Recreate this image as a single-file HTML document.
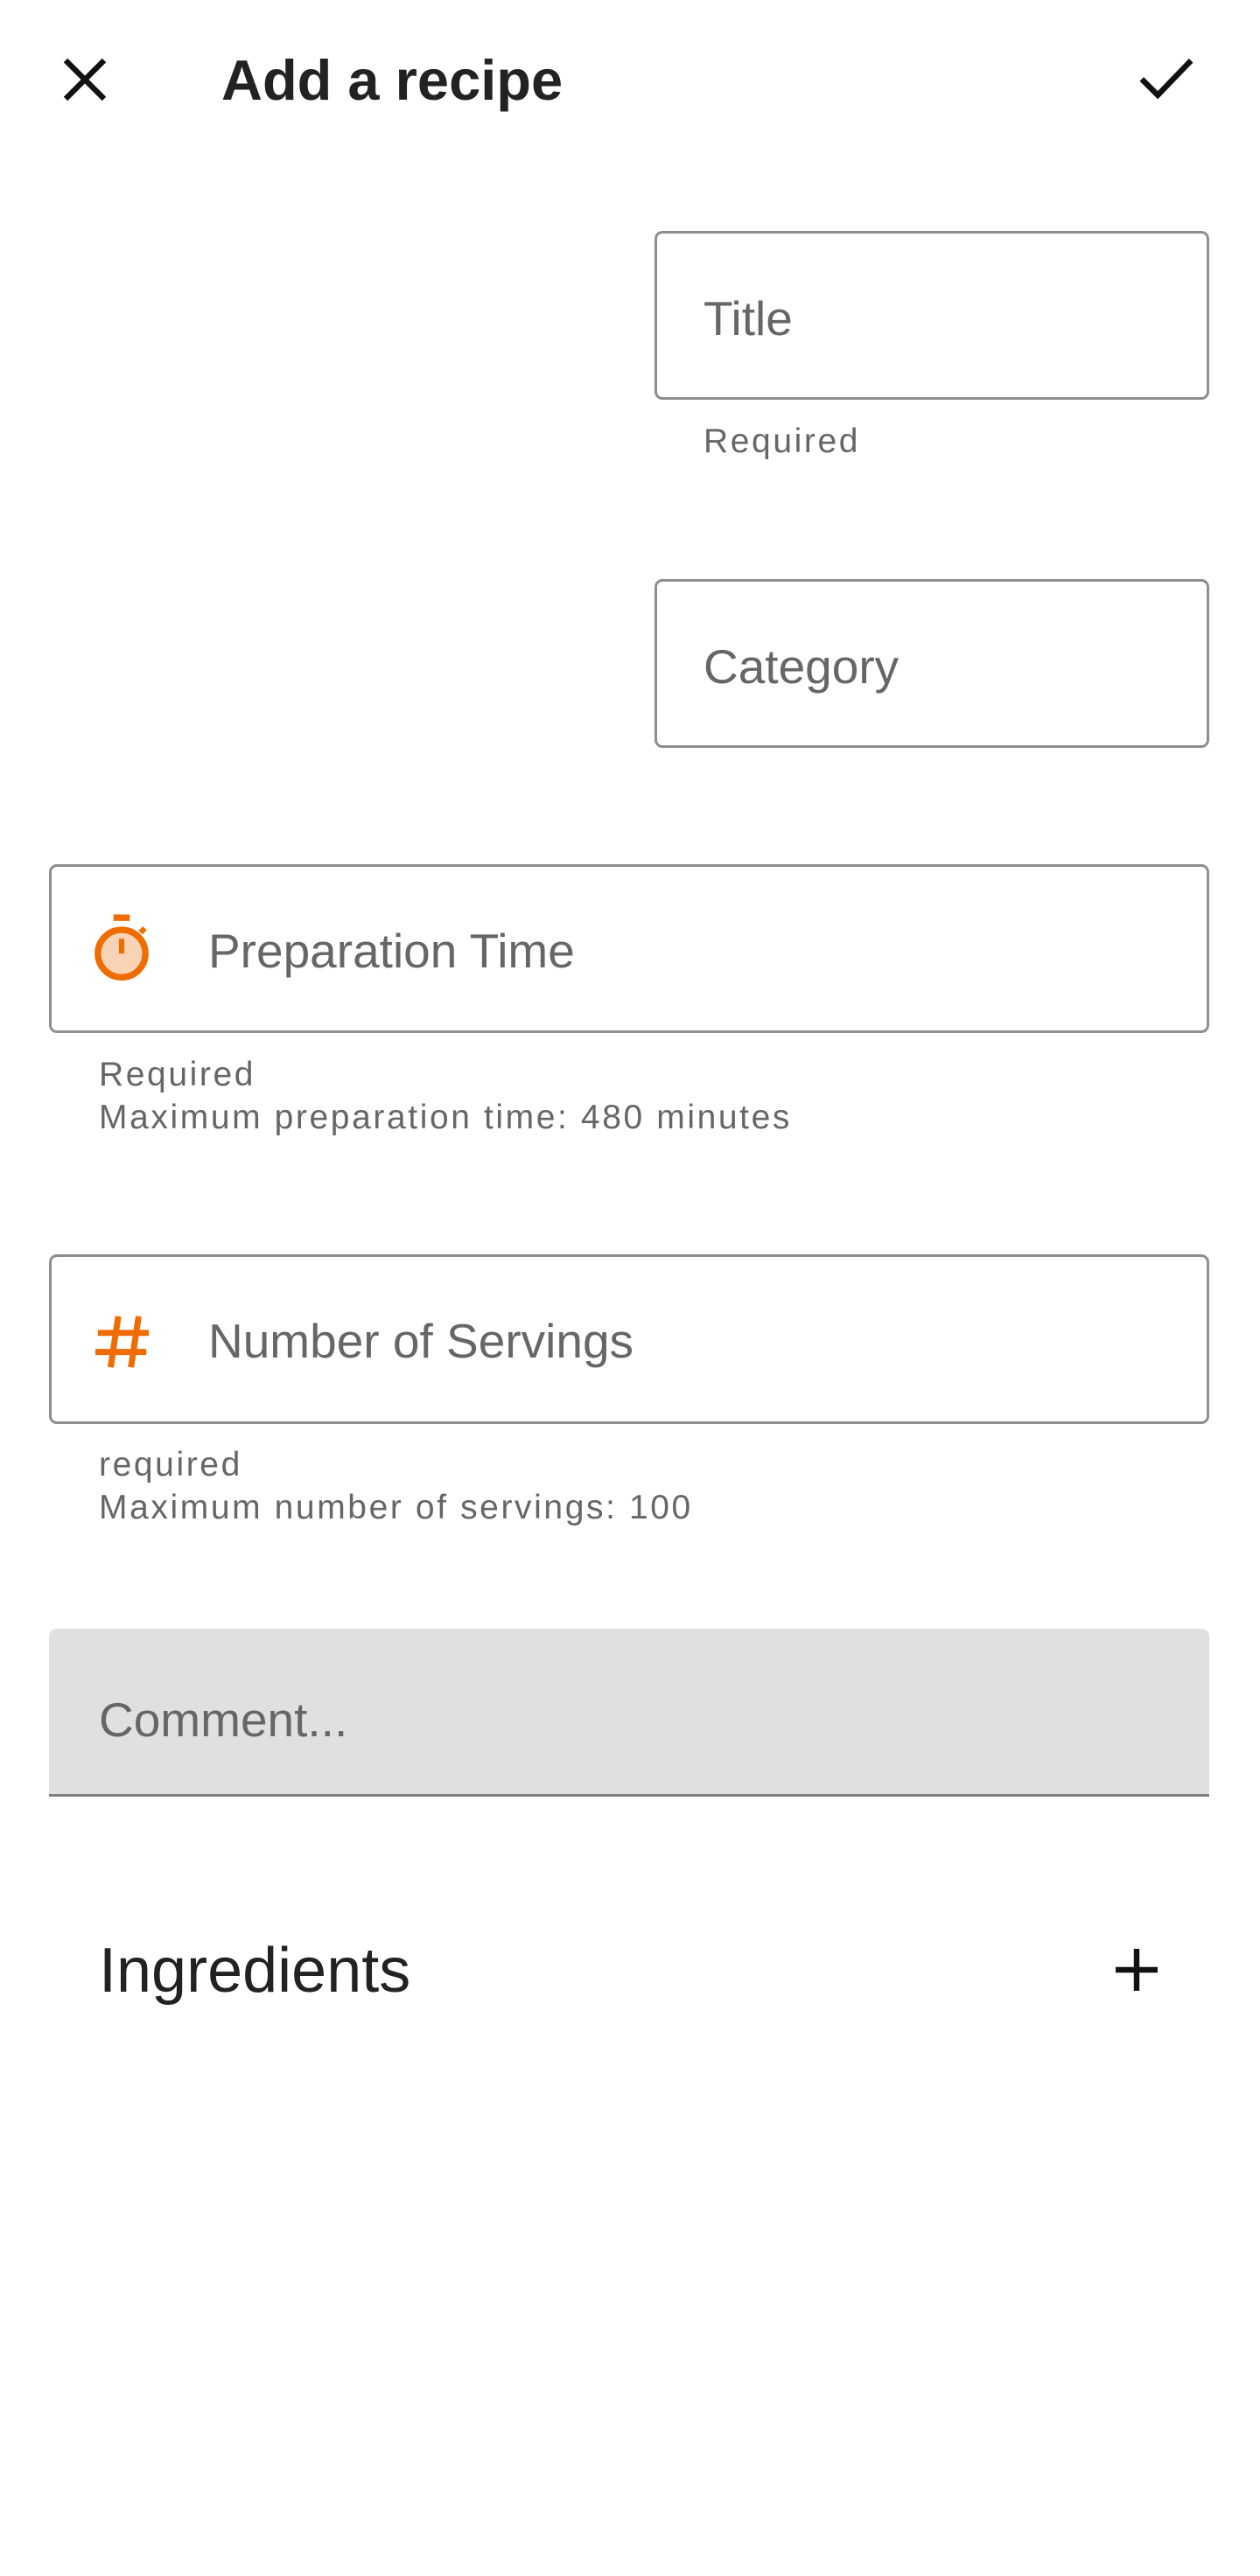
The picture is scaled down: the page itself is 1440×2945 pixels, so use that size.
<!DOCTYPE html>
<html><head><meta charset="utf-8"><style>
*{margin:0;padding:0;box-sizing:border-box}
body{width:1440px;height:2945px;background:#fff;font-family:"Liberation Sans",sans-serif;position:relative;overflow:hidden}
.a{position:absolute}
.box{position:absolute;border:3px solid #8e8e8e;border-radius:9px}
.ph{position:absolute;font-size:55px;color:#666;line-height:1}
.help{position:absolute;font-size:39px;color:#666;letter-spacing:2.6px;line-height:49px}
</style></head><body>
<svg class="a" style="left:64px;top:58px" width="66" height="66" viewBox="0 0 24 24"><path d="M4 4L20 20M20 4L4 20" stroke="#111" stroke-width="2.3" fill="none"/></svg>
<div class="a" style="left:253px;top:57px;font-size:65px;font-weight:bold;color:#222;line-height:70px">Add a recipe</div>
<svg class="a" style="left:1298px;top:58px" width="70" height="62" viewBox="0 0 24 22"><path d="M2 11.5L8.5 18L22 4" stroke="#111" stroke-width="2.3" fill="none"/></svg>

<div class="box" style="left:748px;top:264px;width:634px;height:193px"></div>
<div class="ph" style="left:804px;top:337px">Title</div>
<div class="help" style="left:804px;top:480px">Required</div>

<div class="box" style="left:748px;top:662px;width:634px;height:193px"></div>
<div class="ph" style="left:804px;top:735px">Category</div>

<div class="box" style="left:56px;top:988px;width:1326px;height:193px"></div>
<svg class="a" style="left:102px;top:1043px" width="74" height="82" viewBox="0 0 24 26"><rect x="9" y="0.5" width="6" height="2.4" fill="#ef6c00"/><circle cx="12" cy="15" r="8.8" fill="#f8d3b6" stroke="#ef6c00" stroke-width="2.4"/><path d="M12 9.5v5.5" stroke="#ef6c00" stroke-width="2"/><path d="M19 7.2l1.6-1.6" stroke="#ef6c00" stroke-width="2"/></svg>
<div class="ph" style="left:238px;top:1060px">Preparation Time</div>
<div class="help" style="left:113px;top:1204px">Required<br>Maximum preparation time: 480 minutes</div>

<div class="box" style="left:56px;top:1434px;width:1326px;height:194px"></div>
<svg class="a" style="left:108px;top:1502px" width="66" height="64" viewBox="0 0 22 22"><path d="M9 1L6 21M17 1L14 21M1 7.5H21M0 15H20" stroke="#ef6c00" stroke-width="2.4" fill="none"/></svg>
<div class="ph" style="left:238px;top:1506px">Number of Servings</div>
<div class="help" style="left:113px;top:1650px">required<br>Maximum number of servings: 100</div>

<div class="a" style="left:56px;top:1862px;width:1326px;height:192px;background:#e0e0e0;border-radius:9px 9px 0 0;border-bottom:3px solid #7f7f7f"></div>
<div class="ph" style="left:113px;top:1939px">Comment...</div>

<div class="a" style="left:113px;top:2218px;font-size:72px;color:#222;line-height:70px">Ingredients</div>
<svg class="a" style="left:1267px;top:2220px" width="64" height="64" viewBox="0 0 24 24"><path d="M12 3v18M3 12h18" stroke="#111" stroke-width="2.4"/></svg>
</body></html>
